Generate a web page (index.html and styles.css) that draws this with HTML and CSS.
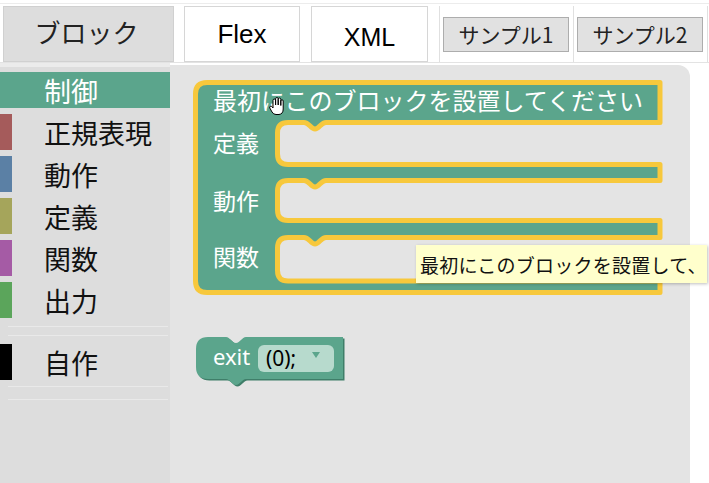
FILE: index.html
```html
<!DOCTYPE html>
<html lang="ja">
<head>
<meta charset="utf-8">
<link rel="stylesheet" href="styles.css">
</head>
<body>
<div class="tabs">
  <div class="tab tab-active jp">ブロック</div>
  <div class="tab tab-flex">Flex</div>
  <div class="tab tab-xml">XML</div>
  <div class="samples">
    <div class="cell"><button class="btn jp">サンプル1</button></div>
    <div class="cell"><button class="btn jp">サンプル2</button></div>
  </div>
</div>
<div class="main">
  <nav class="toolbox jp">
    <div class="cat selected">制御</div>
    <div class="cat c-regex">正規表現</div>
    <div class="cat c-act">動作</div>
    <div class="cat c-def">定義</div>
    <div class="cat c-fn">関数</div>
    <div class="cat c-out">出力</div>
    <div class="sep"></div>
    <div class="cat c-own">自作</div>
    <div class="sep sep2"></div>
  </nav>
  <section class="workspace">
    <svg class="canvas" width="520" height="420" viewBox="170 63 520 420" xmlns="http://www.w3.org/2000/svg">
      <path class="blk" d="M207,82.5 L660,82.5 L660,122.5 L326,122.5 C321,122.5 319,129 315,129 C311,129 309,122.5 304,122.5 L288,122.5 Q277.5,122.5 277.5,133 L277.5,154 Q277.5,164.5 288,164.5 L660,164.5 L660,180.5 L326,180.5 C321,180.5 319,187 315,187 C311,187 309,180.5 304,180.5 L288,180.5 Q277.5,180.5 277.5,191 L277.5,210 Q277.5,220.5 288,220.5 L660,220.5 L660,237.5 L326,237.5 C321,237.5 319,244 315,244 C311,244 309,237.5 304,237.5 L288,237.5 Q277.5,237.5 277.5,248 L277.5,270.5 Q277.5,281 288,281 L660,281 L660,292.5 L207,292.5 Q195.5,292.5 195.5,281 L195.5,94 Q195.5,82.5 207,82.5 Z"/>
      <text class="t-head" x="213" y="110">最初にこのブロックを設置してください</text>
      <text class="t-lab" x="213" y="152">定義</text>
      <text class="t-lab" x="213" y="210">動作</text>
      <text class="t-lab" x="213" y="266">関数</text>

      <path class="exit-shadow" transform="translate(1.5,1.5)" d="M208,337 L226,337 C230,337 232,343 236,343 C240,343 242,337 246,337 L343,337 L343,379 L246,379 C242,379 240,385 236,385 C232,385 230,379 226,379 L208,379 Q196,379 196,367 L196,349 Q196,337 208,337 Z"/>
      <path class="exit" d="M208,337 L226,337 C230,337 232,343 236,343 C240,343 242,337 246,337 L343,337 L343,379 L246,379 C242,379 240,385 236,385 C232,385 230,379 226,379 L208,379 Q196,379 196,367 L196,349 Q196,337 208,337 Z"/>
      <text class="t-exit" x="213" y="365">exit</text>
      <rect class="field" x="258" y="345" width="76" height="27" rx="6"/>
      <text class="t-field" x="266" y="366">(0);</text>
      <polygon class="arrow" points="312,352 320,352 316,358"/>

      <g class="cursor" transform="translate(269,97)">
        <path d="M4,9 L4,3.5 Q4,2 5.3,2 Q6.6,2 6.6,3.5 L6.6,8 L6.6,1.8 Q6.6,0.5 7.9,0.5 Q9.2,0.5 9.2,1.8 L9.2,8 L9.2,2.3 Q9.2,1 10.5,1 Q11.8,1 11.8,2.3 L11.8,8.5 L11.8,4 Q11.8,2.8 13,2.8 Q14.2,2.8 14.2,4 L14.2,12 Q14.2,17 10,17.5 L7,17.5 Q4.5,17.5 3,15 L0.8,11 Q0.2,9.8 1.2,9.3 Q2.3,8.8 3.2,10 L4,11 Z"/>
      </g>
    </svg>
    <div class="tooltip jp">最初にこのブロックを設置して、</div>
  </section>
</div>
</body>
</html>
```

FILE: styles.css
```css
* { box-sizing: border-box; }

html, body {
  margin: 0;
  padding: 0;
  background: #ffffff;
  overflow: hidden;
  width: 709px;
  height: 483px;
}

body {
  font-family: "Noto Sans CJK JP", "Noto Sans", sans-serif;
  color: #000;
}

.jp { font-family: "Noto Sans CJK JP", sans-serif; }

.tabs {
  display: flex;
  margin-top: 3px;
  border-top: 1px solid #ececec;
  padding: 2px 0 0 3px;
  height: 60px;
  border-bottom: 1px solid #e3e3e3;
}

.tab {
  height: 56px;
  display: flex;
  align-items: center;
  justify-content: center;
  border: 1px solid #d6d6d6;
  background: #fff;
  font-size: 26px;
  margin-right: 10px;
}

.tab-active {
  width: 171px;
  background: #dddddd;
  border-color: #d0d0d0;
  color: #222;
  padding: 0 4px 6px 0;
}

.tab-flex {
  width: 116px;
  font-family: "Liberation Sans", Arial, sans-serif;
  font-size: 26px;
  margin-right: 11px;
}

.tab-xml {
  width: 117px;
  font-family: "Liberation Sans", Arial, sans-serif;
  font-size: 25px;
  margin-right: 11px;
  padding-top: 6px;
}

.samples {
  display: flex;
  height: 56px;
  border-right: 1px solid #e0e0e0;
}

.cell {
  width: 134px;
  border-left: 1px solid #e0e0e0;
  display: flex;
  align-items: center;
  padding: 0 3px;
}

.btn {
  width: 126px;
  height: 35px;
  margin: 0;
  padding: 0;
  background: #e1e1e1;
  border: 1px solid #adadad;
  border-radius: 0;
  font-size: 21px;
  color: #222;
  line-height: 1;
}

.main {
  display: flex;
  height: 420px;
}

.toolbox {
  width: 170px;
  background: #dddddd;
  border-top: 4px solid #ebebeb;
  padding-top: 5px;
  display: flex;
  flex-direction: column;
}

.cat {
  height: 36px;
  margin-bottom: 6px;
  display: flex;
  align-items: center;
  padding-left: 32px;
  border-left: 12px solid transparent;
  font-size: 27px;
  line-height: 1;
  color: #111;
}

.cat.selected {
  background: #5ba58c;
  border-left-color: #5ba58c;
  color: #fff;
}

.c-regex { border-left-color: #a55b5b; }
.c-act   { border-left-color: #5b80a5; }
.c-def   { border-left-color: #a5a55b; }
.c-fn    { border-left-color: #a55ba5; }
.c-out   { border-left-color: #5ba55b; }
.c-own   { border-left-color: #000000; }

.sep {
  margin: 2px 2px 8px 8px;
  height: 10px;
  border-top: 1px solid #e9e9e9;
  border-bottom: 1px solid #e9e9e9;
}

.sep2 {
  margin-top: 0;
  height: 14px;
}

.workspace {
  position: relative;
  width: 520px;
  height: 420px;
  background: #e4e4e4;
  border-top-right-radius: 12px;
  margin-top: 2px;
}

.canvas {
  position: absolute;
  left: 0;
  top: -2px;
  overflow: visible;
}

.blk {
  fill: #5ba58c;
  stroke: #f7c83c;
  stroke-width: 5;
  stroke-linejoin: round;
}

.t-head, .t-lab {
  font-family: "Noto Sans CJK JP", sans-serif;
  fill: #ffffff;
}

.t-head { font-size: 24px; }
.t-lab { font-size: 23px; }

.exit { fill: #5ba58c; }
.exit-shadow { fill: #3f7e69; }

.t-exit {
  font-family: "Noto Sans", sans-serif;
  font-size: 22px;
  fill: #ffffff;
}

.field { fill: #b7dacd; }

.t-field {
  font-family: "Noto Sans", sans-serif;
  font-size: 21px;
  fill: #000;
}

.arrow { fill: #5ba58c; }

.cursor path {
  fill: #ffffff;
  stroke: #000000;
  stroke-width: 1;
  stroke-linejoin: round;
}

.tooltip {
  position: absolute;
  left: 246px;
  top: 180px;
  height: 38px;
  padding: 0 0 0 4px;
  display: flex;
  align-items: center;
  white-space: nowrap;
  background: #ffffcc;
  font-size: 19px;
  letter-spacing: 0.25px;
  color: #111;
  box-shadow: 1px 1px 3px rgba(0,0,0,0.25);
}
```
